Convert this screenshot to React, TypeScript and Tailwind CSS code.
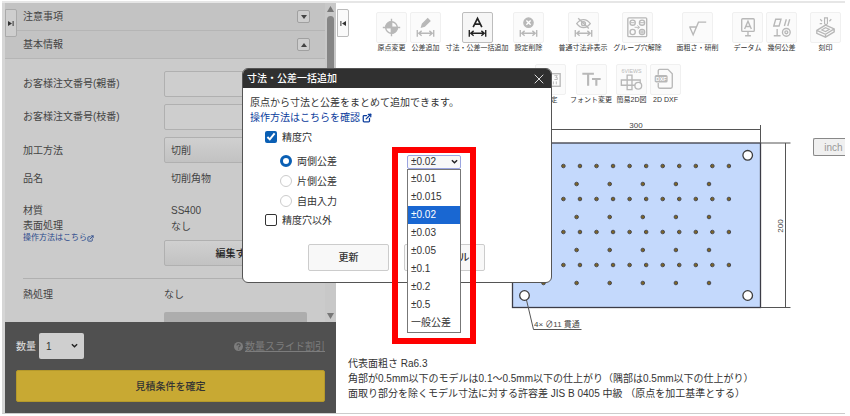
import { useState } from "react"
import type { ReactNode } from "react"
import { ExternalLink, X } from "lucide-react"
import clsx from "clsx"

const tolerances = ["±0.01", "±0.015", "±0.02", "±0.03", "±0.05", "±0.1", "±0.2", "±0.5", "一般公差"]

function Glyph({ children }: { children: ReactNode }) {
  return (
    <svg viewBox="0 0 30 30" className="size-full" fill="none" stroke="currentColor" strokeWidth="1.4">
      {children}
    </svg>
  )
}

const widthArrow = <path d="M6.5 17.5v7M23.5 17.5v7M8 21h14M11 18.5l-3 2.5 3 2.5M19 18.5l3 2.5-3 2.5" />

const icons: Record<string, ReactNode> = {
  origin: (
    <Glyph>
      <circle cx="15" cy="15" r="6" />
      <path d="M15 6v18M6 15h18" />
      <path d="M15 15V9a6 6 0 0 0-6 6zM15 15v6a6 6 0 0 0 6-6z" fill="currentColor" />
    </Glyph>
  ),
  edit: (
    <Glyph>
      <path d="M11 14.5l.8-3 5.5-5.500 2.200 2.200-5.500 5.500z" fill="currentColor" />
      {widthArrow}
    </Glyph>
  ),
  addAll: (
    <Glyph>
      <path d="M10.5 14.5L15 5.500l4.500 9M12 11.500h6" strokeWidth="1.7" />
      {widthArrow}
    </Glyph>
  ),
  remove: (
    <Glyph>
      <circle cx="15" cy="10" r="4.8" fill="currentColor" />
      <path d="M12.8 7.8l4.4 4.4M17.2 7.8l-4.4 4.4" stroke="white" />
      {widthArrow}
    </Glyph>
  ),
  hide: (
    <Glyph>
      <path d="M8 11c4-5.500 10-5.500 14 0-4 5.500-10 5.500-14 0z" />
      <circle cx="15" cy="11" r="2" />
      <path d="M9.5 5.5l11 10.5" />
      {widthArrow}
    </Glyph>
  ),
  group: (
    <Glyph>
      <rect x="5" y="5" width="19.5" height="19.5" rx="1" />
      <circle cx="10" cy="10" r="2.7" />
      <circle cx="19.7" cy="10" r="2.7" />
      <circle cx="10" cy="19.7" r="2.7" />
      <circle cx="19.7" cy="19.7" r="2.7" />
      <path d="M19.7 17v5.4M17 19.7h5.4M12 14.8h5M15 12.8l2 2-2 2M8 10h4M17.7 10h4" strokeWidth="1" />
    </Glyph>
  ),
  rough: (
    <Glyph>
      <path d="M6.5 14.5h7.5M7 14.5l3.5 8 5.5-13h8" />
    </Glyph>
  ),
  datum: (
    <Glyph>
      <rect x="9" y="6" width="13" height="13" rx="1" />
      <path d="M12 16.5l3.5-8 3.5 8M13 14h5M15.5 19v4M12.5 23.5h6" />
    </Glyph>
  ),
  geometric: (
    <Glyph>
      <path d="M7 13.5l2-7h5.5l-2 7zM18 13.5l2-7M21.5 13.5l2-7M10.5 16.5v7M7 23.5h7" />
      <circle cx="20" cy="20" r="4" />
      <circle cx="20" cy="20" r="1.5" />
    </Glyph>
  ),
  stamp: (
    <Glyph>
      <path d="M6 18l9-5.500 9 4v3l-9 5.500-9-4zM6 18l9 4 9-5.500M15 22v3" />
      <path d="M11 17.5l4-2.300 4 1.600-4 2.400zM14 5h3v6l-1.500 1.500L14 11zM9.500 6.500l2 2M9 11h2.500M21 6.500l-2 2" strokeWidth="1.2" />
    </Glyph>
  ),
  decimals: (
    <Glyph>
      <rect x="5" y="9" width="20" height="13" />
      <path d="M8 11v4M12 11h3l-1.500 2H15v2h-3M19 11h3l-1.500 2H22v2h-3M8 19h4M15 17v3M18 17v3M21 17v3" strokeWidth="1" />
    </Glyph>
  ),
  font: (
    <Glyph>
      <path d="M5.5 9h12M11.5 9v12.5M15.5 14.5h9M20 14.5v7" strokeWidth="2.2" />
    </Glyph>
  ),
  views: (
    <Glyph>
      <text x="15" y="8.5" fontSize="5.5" textAnchor="middle" fill="currentColor" stroke="none">6VIEWS</text>
      <path d="M10.5 10.5h5v5h8.5v5.5H15.5v4.5h-5v-4.5H4.5v-5.500h6zM10.5 15.5h5v5.5h-5z" />
      <circle cx="22" cy="21.5" r="3.5" fill="#fbfbfb" />
    </Glyph>
  ),
  dxf: (
    <Glyph>
      <path d="M7.5 10V6a1.5 1.5 0 0 1 1.5-1.5h8.5L22 9v13.5a1.5 1.5 0 0 1-1.5 1.5H9a1.5 1.5 0 0 1-1.5-1.5v-4" />
      <rect x="4.5" y="11" width="12" height="6.5" rx="1" fill="currentColor" />
      <text x="10.5" y="16.2" fontSize="5.5" fontWeight="bold" textAnchor="middle" fill="white" stroke="none">DXF</text>
    </Glyph>
  ),
}

interface ToolProps {
  icon: string
  label: string
  className?: string
  active?: boolean
}

function Tool({ icon, label, className = "w-[31px]", active }: ToolProps) {
  return (
    <button type="button" className={clsx("flex flex-col items-center", className)}>
      <span
        className={clsx(
          "size-[31px] rounded-xs border",
          active ? "border-[#bdbdbd] bg-[#f6f6f6] text-[#222]" : "border-[#f0f0f0] bg-[#fbfbfb] text-[#b8b8b8]"
        )}
      >
        {icons[icon]}
      </span>
      <span className="whitespace-nowrap text-[7px] leading-[10px] text-[#333]">{label}</span>
    </button>
  )
}

function Toolbar() {
  return (
    <div className="space-y-[11px] pt-[9px] pl-10">
      <div className="flex gap-[13px]">
        <div className="flex gap-[3px]">
          <Tool icon="origin" label="原点変更" />
          <Tool icon="edit" label="公差追加" />
          <Tool icon="addAll" label="寸法・公差一括追加" className="w-[66px]" active />
          <Tool icon="remove" label="設定削除" />
        </div>
        <div className="flex gap-[3px]">
          <Tool icon="hide" label="普通寸法非表示" className="w-[52px]" />
          <Tool icon="group" label="グループ穴解除" className="w-[51px]" />
        </div>
        <Tool icon="rough" label="面粗さ・研削" className="w-[43px]" />
        <div className="flex gap-[3px]">
          <Tool icon="datum" label="データム" />
          <Tool icon="geometric" label="幾何公差" />
        </div>
        <Tool icon="stamp" label="刻印" />
      </div>
      <div className="ml-[159px] flex gap-[3px]">
        <Tool icon="decimals" label="設定" />
        <Tool icon="font" label="フォント変更" className="w-[44px]" />
        <Tool icon="views" label="簡易2D図" />
        <Tool icon="dxf" label="2D DXF" />
      </div>
    </div>
  )
}

const denseRows = [48, 81, 114, 147]
const sparseRows = [66, 99, 132, 165]

function PlateDrawing() {
  return (
    <svg viewBox="0 0 300 216" className="w-[300px] shrink-0" role="img" aria-label="300 x 200">
      <rect x="12.5" y="25" width="248" height="164.5" fill="#c4d9fc" stroke="#3c3c46" strokeWidth="1.3" />
      <g stroke="#555" strokeWidth="1" fill="none">
        <path d="M12.5 6v19M12.5 11.5h248M260.5 7v18M260.5 25h30M260.5 189.5h30M285.5 25v164.5" />
        <path d="M26.5 182l7 29.5h48" />
      </g>
      <g fill="#7d6524" stroke="#4a4c55" strokeWidth="1">
        {denseRows.map((y) =>
          Array.from({ length: 13 }, (_, i) => <circle key={`${y}-${i}`} cx={30.3 + i * 16.55} cy={y} r="1.8" />)
        )}
        {sparseRows.map((y) =>
          Array.from({ length: 6 }, (_, i) => <circle key={`${y}-${i}`} cx={43.5 + i * 33.1} cy={y} r="1.8" />)
        )}
      </g>
      <g fill="white" stroke="#3c3c3c" strokeWidth="1.3">
        <circle cx="247.7" cy="37.3" r="4.8" />
        <circle cx="247.7" cy="177.5" r="4.8" />
        <circle cx="24.5" cy="177.5" r="4.8" />
      </g>
      <g fill="#444" fontSize="8">
        <text x="136" y="9.5" textAnchor="middle">300</text>
        <text transform="translate(283 108) rotate(-90)" textAnchor="middle">200</text>
        <text x="34" y="209">4× ∅11 貫通</text>
      </g>
    </svg>
  )
}

function Chevron({ className }: { className?: string }) {
  return (
    <svg viewBox="0 0 8 6" className={clsx("pointer-events-none", className)} fill="none" stroke="#222" strokeWidth="1.6">
      <path d="M1 1.3l3 3 3-3" />
    </svg>
  )
}

function SectionHeader({ title, open }: { title: string; open?: boolean }) {
  return (
    <button
      type="button"
      className="flex h-7 w-full shrink-0 items-center justify-between border-b border-[#b5b5b5] bg-[#c3c3c3] pr-[15px] pl-[18px] text-[10px] text-[#444]"
    >
      {title}
      <span className="flex size-[13px] items-center justify-center rounded-xs border border-[#a0a0a0] bg-[#cecece]">
        <svg viewBox="0 0 6 4" className="w-1.5" fill="#444">
          {open ? <path d="M0 4l3-4 3 4z" /> : <path d="M0 0l3 4 3-4z" />}
        </svg>
      </span>
    </button>
  )
}

const fieldClass = "h-[26px] w-[143px] rounded-xs border border-[#b0b0b0]"
const raisedClass = "bg-linear-to-b from-[#d0d0d0] to-[#c2c2c2]"

function Sidebar() {
  return (
    <aside className="relative flex w-[334px] shrink-0 flex-col border-l-3 border-[#d6d6d6] bg-[#cbcbcb] text-[10px] text-[#444]">
      <div className="flex min-h-0 flex-1">
        <div className="min-w-0 flex-1 overflow-hidden">
          <SectionHeader title="注意事項" />
          <SectionHeader title="基本情報" open />
          <div className="pt-2 pr-[11px] pl-[18px]">
            <div className="flex h-[33px] items-center">
              <label htmlFor="order" className="w-[141px]">お客様注文番号(親番)</label>
              <input id="order" className={clsx(fieldClass, "bg-[#cecece]")} />
            </div>
            <div className="flex h-[33px] items-center">
              <label htmlFor="branch" className="w-[141px]">お客様注文番号(枝番)</label>
              <input id="branch" className={clsx(fieldClass, "bg-[#cecece]")} />
            </div>
            <div className="flex h-[34px] items-center">
              <label htmlFor="method" className="w-[141px]">加工方法</label>
              <select id="method" className={clsx(fieldClass, raisedClass, "appearance-none px-1.5")}>
                <option>切削</option>
              </select>
            </div>
            <div className="flex h-[23px] items-center">
              <span className="w-[148px]">品名</span>
              <span>切削角物</span>
            </div>
            <div className="mt-[11px] flex h-[18px] items-center">
              <span className="w-[148px]">材質</span>
              <span>SS400</span>
            </div>
            <div className="flex items-start border-b border-[#b0b0b0] pb-3">
              <div className="w-[141px]">
                <div className="leading-[13px]">表面処理</div>
                <a href="#surface" className="flex items-center text-[8px] leading-3 text-[#2c4a8c]">
                  操作方法はこちら
                  <ExternalLink className="size-[7px]" strokeWidth={3} />
                </a>
              </div>
              <div>
                <div className="pl-[7px] leading-4">なし</div>
                <button type="button" className={clsx(fieldClass, raisedClass, "mt-[5px] font-medium text-[#222]")}>
                  編集する
                </button>
              </div>
            </div>
            <div className="flex items-start pt-2 leading-4">
              <span className="w-[141px]">熱処理</span>
              <div>
                <div>なし</div>
                <button type="button" aria-label="熱処理を編集" className="mt-[9px] h-[26px] w-[143px] rounded-xs bg-[#adadad]" />
              </div>
            </div>
          </div>
        </div>
        <div className="flex w-[11px] flex-col items-center justify-between bg-[#c8c8c8] py-[3px]">
          <svg viewBox="0 0 7 6" className="w-[7px]" fill="#777"><path d="M0 6l3.5-6L7 6z" /></svg>
          <div className="mt-1 mb-auto h-[204px] w-[7px] rounded-full bg-[#858585]" />
          <svg viewBox="0 0 7 6" className="w-[7px]" fill="#777"><path d="M0 0l3.5 6L7 0z" /></svg>
        </div>
      </div>
      <div className="shrink-0 bg-[#505050] p-[11px]">
        <div className="flex items-center justify-between">
          <div className="flex items-center gap-[3px]">
            <label htmlFor="qty" className="text-[#e0e0e0]">数量</label>
            <div className="relative">
              <select id="qty" className="h-[26px] w-[45px] appearance-none rounded-xs bg-[#cfcfcf] px-[7px] text-[#333]">
                <option>1</option>
              </select>
              <Chevron className="absolute top-2.5 right-1.5 w-[7px]" />
            </div>
          </div>
          <a href="#discount" className="flex items-center gap-0.5 text-[#7d7d7d]">
            <svg viewBox="0 0 10 10" className="size-[9px]" fill="none">
              <circle cx="5" cy="5" r="5" fill="currentColor" />
              <path d="M3.3 3.9c0-2.3 3.5-2.3 3.5-.1 0 1.2-1.7 1.2-1.7 2.4M5.1 7.2v1.2" stroke="#505050" strokeWidth="1.3" />
            </svg>
            <span className="underline">数量スライド割引</span>
          </a>
        </div>
        <button type="button" className="mt-[11px] block h-8 w-full rounded-xs border border-[#b5992b] bg-[#c8a933] font-medium text-[#333]">
          見積条件を確定
        </button>
      </div>
      <button type="button" aria-label="開く" className="absolute top-1.5 left-0 flex h-7 w-3 items-center justify-center rounded-r-xs border border-[#aaa] bg-[#cecece]">
        <svg viewBox="0 0 6 5" className="w-1.5" fill="#333"><path d="M0 0l4 2.5L0 5zM4.6 0h1v5h-1z" /></svg>
      </button>
    </aside>
  )
}

function ToleranceDialog() {
  const [mode, setMode] = useState("両側公差")
  const [value, setValue] = useState("±0.02")

  return (
    <div role="dialog" aria-label="寸法・公差一括追加" className="absolute top-[68px] left-[242px] w-[310px] rounded-md border border-[#555] bg-white text-[10px] text-[#333]">
      <div className="flex h-[19px] items-center justify-between rounded-t-[5px] bg-[#303030] px-1 font-medium text-white">
        寸法・公差一括追加
        <button type="button" aria-label="閉じる">
          <X className="size-4 text-[#ddd]" strokeWidth={1.5} />
        </button>
      </div>
      <div className="px-[7px] pt-[7px] pb-[11px]">
        <p className="leading-[15px]">原点から寸法と公差をまとめて追加できます。</p>
        <a href="#help" className="flex items-center gap-0.5 leading-[15px] text-[#0b3c9c]">
          操作方法はこちらを確認
          <ExternalLink className="size-2.5" strokeWidth={3} />
        </a>
        <label className="mt-[3px] flex h-[18px] items-center gap-[5px] pl-[15px]">
          <input type="checkbox" defaultChecked className="size-3 accent-[#0a5fb4]" />
          精度穴
        </label>
        <div className="mt-[7px] space-y-1 pl-[30px]">
          {["両側公差", "片側公差", "自由入力"].map((name) => (
            <label key={name} className="flex h-4 items-center gap-[5px]">
              <input
                type="radio"
                name="mode"
                checked={mode === name}
                onChange={() => setMode(name)}
                className="size-3 appearance-none rounded-full border border-[#ccc] checked:border-3 checked:border-[#0a5fb4]"
              />
              {name}
            </label>
          ))}
        </div>
        <label className="mt-[3px] flex h-4 items-center gap-[5px] pl-[15px]">
          <input type="checkbox" className="size-3 appearance-none rounded-xs border border-[#333]" />
          精度穴以外
        </label>
        <div className="mt-4 flex gap-[15px] pl-[58px] font-medium">
          <button type="button" className="h-[27px] w-[81px] rounded-xs border border-[#ccc] bg-[#f8f8f8]">更新</button>
          <button type="button" className="h-[27px] w-[81px] rounded-xs border border-[#ccc] bg-[#f8f8f8]">キャンセル</button>
        </div>
      </div>

      <div className="absolute top-[78px] left-[149px] border-6 border-[#fe0000] px-[9px] pt-[2px] pb-[5px]">
        <div className="relative">
          <select
            aria-label="公差"
            value={value}
            onChange={(e) => setValue(e.target.value)}
            className="block h-[14px] w-[54px] appearance-none rounded-xs border border-[#9aa4e0] bg-[#f8f8f8] pl-[3px] text-[10px] leading-3"
          >
            {tolerances.map((t) => (
              <option key={t}>{t}</option>
            ))}
          </select>
          <Chevron className="absolute top-1 right-[3px] w-[7px]" />
        </div>
        <ul role="listbox" aria-label="公差" className="w-[54px] border border-[#777] bg-white">
          {tolerances.map((t) => (
            <li
              key={t}
              role="option"
              aria-selected={t === value}
              className={clsx("h-[18px] pl-[3px] leading-[18px]", t === value && "bg-[#1967d2] text-white")}
            >
              {t}
            </li>
          ))}
        </ul>
      </div>
    </div>
  )
}

export default function App() {
  return (
    <div className="relative flex h-screen overflow-hidden bg-white pt-px pr-[5px] pb-0.5 pl-0.5 font-['Liberation_Sans','Noto_Sans_CJK_JP',sans-serif]">
      <div className="flex min-w-0 flex-1 border-t-2 border-b border-t-[#e6e6e6] border-b-[#ccc]">
        <Sidebar />
        <main className="relative min-w-0 flex-1">
          <Toolbar />
          <div className="mt-[13px] flex items-start pl-[164px]">
            <PlateDrawing />
            <button type="button" className="mt-5 ml-[13px] h-[18px] flex-1 overflow-hidden rounded-l-xs border border-r-0 border-[#888] bg-[#f0f0f0] pl-2 text-[10px] text-[#999]">
              inch
            </button>
          </div>
          <div className="mt-[22px] pl-3 text-[10px] leading-[15px] text-[#333]">
            <p>代表面粗さ Ra6.3</p>
            <p>角部が0.5mm以下のモデルは0.1～0.5mm以下の仕上がり（隅部は0.5mm以下の仕上がり）</p>
            <p>面取り部分を除くモデル寸法に対する許容差 JIS B 0405 中級 （原点を加工基準とする）</p>
          </div>
          <button type="button" aria-label="閉じる" className="absolute top-1.5 left-[1px] flex h-7 w-3 items-center justify-center rounded-r-xs border border-[#bbb] bg-[#fafafa]">
            <svg viewBox="0 0 6 5" className="w-1.5" fill="#333"><path d="M6 0L2 2.5 6 5zM.4 0h1v5h-1z" /></svg>
          </button>
        </main>
      </div>
      <ToleranceDialog />
    </div>
  )
}
